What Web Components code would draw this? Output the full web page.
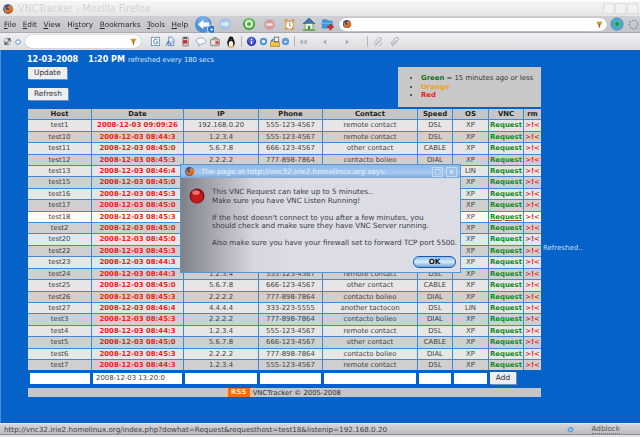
<!DOCTYPE html>
<html>
<head>
<meta charset="utf-8">
<title>VNCTracker - Mozilla Firefox</title>
<style>
  html, body { margin: 0; height: 100%; overflow: hidden; background: #0562c9; }
  body { font: 8px "DejaVu Sans", sans-serif; }
</style>
</head>
<body>
<ff-window>
  <vnc-page></vnc-page>
</ff-window>

<script>
// small toolbar icons, all drawn in a 16x16 box
const ICONS = {
  firefox: '<circle cx="8" cy="8" r="6.5" fill="#2c4f9c"/><path d="M3 3c-1 5 0 11 6 11 4 0 6-3 6-6-1-3-3-6-6-6 1 2 0 3-2 3 0 2 2 2 3 3-1 2-5 2-5-1z" fill="#e8761c"/><path d="M6 13c3 1 7 0 8-5-1 2-4 4-8 5z" fill="#c9401a"/>',
  back: '<circle cx="7" cy="8" r="7" fill="#4c8fd8"/><circle cx="7" cy="6" r="5" fill="#8cbcec" opacity=".6"/><path d="M2.5 8 7 4v2.4h5v3.2H7V12z" fill="#fff"/><circle cx="14" cy="12" r="3.6" fill="#2f78c8" stroke="#fff" stroke-width=".6"/><path d="M12.5 11.5h3l-1.500 2z" fill="#fff"/>',
  fwd: '<circle cx="8" cy="8" r="7" fill="#a9c4e2"/><path d="M13 8 8.500 4v2.400H3.500v3.200h5V12z" fill="#dfe9f4"/>',
  reload: '<circle cx="8" cy="8" r="7" fill="#46a83c"/><circle cx="8" cy="6" r="5" fill="#8ed67c" opacity=".6"/><circle cx="8" cy="8" r="3.600" fill="none" stroke="#fff" stroke-width="1.600"/><circle cx="8" cy="8" r="1.200" fill="#46a83c"/>',
  stop: '<circle cx="8" cy="8" r="6.500" fill="#d89aa0"/><rect x="4" y="6.500" width="8" height="3" rx="1" fill="#f2e0e0"/>',
  clock: '<circle cx="8" cy="9" r="5" fill="#fff" stroke="#e0a050" stroke-width="1.600"/><path d="M8 6v3l2 1" stroke="#906020" fill="none"/><path d="M2 4 5 1.500M14 4l-3-2.500M3 14l2-2M13 14l-2-2" stroke="#d88a30" stroke-width="2"/>',
  home: '<path d="M1 8 8 1.500 15 8" fill="#3a78b8" stroke="#24578f"/><rect x="3.500" y="7.500" width="9" height="7" fill="#f2f2ea" stroke="#5f8a4a" stroke-width=".8"/><rect x="6.700" y="10" width="2.800" height="4.500" fill="#3f9b3c"/><path d="M1 15h14" stroke="#5aa845" stroke-width="1.500"/>',
  addfolder: '<path d="M2 5q0-2.500 2.500-2.500h3L9 4h3.500Q15 4 15 6.500V13H2z" fill="#3f93d6"/><path d="M2 7h13" stroke="#8cc4ee"/><path d="M12 8v7M8.500 11.500h7" stroke="#d8201c" stroke-width="2.400"/>',
  go: '<circle cx="8" cy="8" r="7" fill="#58a6e2"/><circle cx="8" cy="8" r="4.800" fill="#46b89a"/><circle cx="8" cy="8" r="2" fill="#1c8a55"/><circle cx="8" cy="8" r="7" fill="none" stroke="#2e78c2" stroke-width=".8"/>',
  throbber: '<circle cx="8" cy="8" r="5.200" fill="none" stroke="#8a8f96" stroke-width="1.800" stroke-dasharray="2 1.600"/>',
  star: '<path d="M2 3h12l-3 3 1 1-3 2 .5 4-2.500 1-1-5-2.500-2 1-1z" fill="#c89a30"/><path d="M7 7h2v6H7z" fill="#8a6a20"/>',
  gear: '<circle cx="8" cy="8" r="5.500" fill="#8c929c"/><circle cx="6" cy="6" r="2.300" fill="#e6e8ec"/><circle cx="11" cy="10" r="2" fill="#dfe2e8"/><circle cx="5" cy="11.500" r="1.500" fill="#4c5158"/><circle cx="11" cy="4.500" r="1.500" fill="#4c5158"/>',
  dot: '<circle cx="8" cy="8" r="4.500" fill="#fff" stroke="#4f95d8" stroke-width="2"/>',
  g: '<rect x="2" y="2" width="12" height="12" fill="#fff" stroke="#5a8fc8" stroke-width="1.200"/><path d="M11 5.500q-1-1-2.700-1-3 0-3 3.500t3 3.500q2 0 2.700-1V8.300H8.500" fill="none" stroke="#3670b4" stroke-width="1.300"/>',
  doc: '<path d="M5 1.500h5l3 3V14H5z" fill="#dce8f6" stroke="#4d7eb8"/><path d="M2 14c1-3 2-6 3.500-6s2.500 4 3.500 6" fill="none" stroke="#3c70b4" stroke-width="1.500"/><path d="M10 8h2M10 10h2" stroke="#4d7eb8"/>',
  can: '<rect x="4" y="1.500" width="8" height="13" rx="1" fill="#d0d0cc" stroke="#4a4a4a" stroke-width=".8"/><rect x="4.500" y="6" width="6" height="5" fill="#c42a2a"/><rect x="5" y="2" width="5" height="2" fill="#333"/>',
  bubble: '<path d="M8 2.500c4 0 6.500 1.800 6.500 4s-2.500 4-6 4l-4 3 1-3.400C3 10 1.500 8.500 1.500 6.500s2.500-4 6.500-4z" fill="#f6f8fb" stroke="#7f98b6"/>',
  tool: '<rect x="2" y="4" width="12" height="9" rx="1.500" fill="#c8c2bc" stroke="#6e6a66" stroke-width=".8"/><path d="M5 4l1.500-2h3L11 4" fill="#a8a4a0" stroke="#6e6a66" stroke-width=".8"/><circle cx="11" cy="9" r="2.300" fill="#d84a5a"/><rect x="3.500" y="6" width="4" height="5" fill="#ecebe7"/>',
  tux: '<ellipse cx="8" cy="9" rx="5" ry="6" fill="#141414"/><circle cx="8" cy="4" r="3.200" fill="#141414"/><ellipse cx="8" cy="10.500" rx="3" ry="4" fill="#f4f4f0"/><path d="M6.800 4.500h2.400L8 6z" fill="#e8a818"/><path d="M3 15h4l-1-2H4zM13 15H9l1-2h2z" fill="#e8a818"/>',
  info: '<circle cx="8" cy="8" r="6.800" fill="#3640b8"/><circle cx="8" cy="6" r="4.800" fill="#6a74dc" opacity=".6"/><rect x="7" y="7" width="2" height="5" fill="#fff"/><circle cx="8" cy="4.800" r="1.200" fill="#fff"/>',
  up: '<circle cx="8" cy="8" r="6.500" fill="#4f94d6"/><circle cx="8" cy="8" r="3.200" fill="#e6f0fa"/>',
  open: '<path d="M2 7h5l1 1.500h6V14H2z" fill="#f0c040" stroke="#a87818" stroke-width=".8"/><rect x="7" y="1.500" width="6" height="6" fill="#f4f4f4" stroke="#556"/><path d="M3 7l3-3" stroke="#3c70b4" stroke-width="1.500"/>',
  down: '<circle cx="8" cy="8" r="6.500" fill="#5b9cd8"/><path d="M5 7l3 4 3-4z" fill="#e6f0fa"/>',
  rew: '<path d="M8 3 2 8l6 5zM14 3 8 8l6 5z" fill="#b4b8bc"/>',
  prev: '<path d="M10 3.500 5 8l5 4.500z" fill="#a8acb0"/>',
  next: '<path d="M6 3.500 11 8l-5 4.500z" fill="#a8acb0"/>',
  clip: '<path d="M4 14 12 5.500a2 2 0 0 0-3-3L3 9a1.500 1.500 0 0 0 2 2l5-5" fill="none" stroke="#b0b4b8" stroke-width="1.300"/><path d="M9 14l5-5" stroke="#c4c8cc" stroke-width="1.500"/>',
  clip2: '<path d="M4 14 12 5.500a2 2 0 0 0-3-3L3 9a1.500 1.500 0 0 0 2 2l5-5" fill="none" stroke="#b8bcc0" stroke-width="1.500"/>',
  globe: '<circle cx="8" cy="8" r="5" fill="#5a9ee0"/><path d="M5 5q3 1 2 4t4-1" fill="none" stroke="#dff" stroke-width="1.400"/>',
  alert: '<circle cx="8" cy="8" r="7.500" fill="#8c0a10"/><circle cx="8" cy="9" r="6" fill="#c41a1e"/><ellipse cx="7" cy="4.600" rx="3.800" ry="2.300" fill="#f08a8a" opacity=".8"/>'
};

class FfIcon extends HTMLElement {
  connectedCallback() {
    const s = this.getAttribute('size') || 14;
    this.attachShadow({ mode: 'open' }).innerHTML = `
      <style>:host { display: block; flex: none; width: ${s}px; height: ${s}px; } svg { display: block; }</style>
      <svg width="${s}" height="${s}" viewBox="0 0 16 16">${ICONS[this.getAttribute('name')] || ''}</svg>`;
  }
}
customElements.define('ff-icon', FfIcon);

class FfUrlbar extends HTMLElement {
  connectedCallback() {
    this.attachShadow({ mode: 'open' }).innerHTML = `
      <style>
        :host { display: flex; align-items: center; box-sizing: border-box; height: 13px; border-radius: 7px;
                background: #fff; box-shadow: 0 0 1px #8a8f96; padding: 0 3px; }
        .fill { flex: 1; }
      </style>
      <slot name="start"></slot><span class="fill"></span><slot name="end"></slot>`;
  }
}
customElements.define('ff-urlbar', FfUrlbar);

class FfWindow extends HTMLElement {
  constructor() {
    super();
    this.attachShadow({ mode: 'open' }).innerHTML = `
      <style>
        :host { display: flex; flex-direction: column; width: 640px; height: 437px; color: #333;
                font: 7.200px "DejaVu Sans", sans-serif; filter: blur(.3px); }
        .title { height: 16px; display: flex; align-items: center; padding-left: 2px;
                 background: linear-gradient(#f6f6f6, #e6e6e8); border-top: 1px solid #fff; box-sizing: border-box;
                 color: #d2d3d8; font-size: 9.600px; }
        .title span { margin-left: 4px; flex: 1; }
        .wb { display: flex; gap: 1px; margin-right: 2px; }
        .wb i { display: block; width: 11px; height: 11px; border: 1px solid #dcdde0; background: #f2f2f4; box-sizing: border-box; }
        .menu { height: 17px; display: flex; align-items: center; padding-left: 4px; box-sizing: border-box;
                background: linear-gradient(#cfd0d4, #c4c5ca); border-bottom: 1px solid #a8aab0; }
        .menu a { color: #2a2a30; margin-right: 6.500px; font-size: 7.300px; }
        .menu u { text-decoration: underline; }
        .bk { height: 17px; display: flex; align-items: center; padding-left: 2px; box-sizing: border-box;
              background: linear-gradient(#f0f0f2, #dcdde0); }
        .sep { width: 1px; height: 11px; background: #b4b6ba; flex: none; }
        .main { flex: 1; min-height: 0; background: #0562c9; border-left: 1px solid #4a8ed8; }
        .status { height: 11px; flex: none; display: flex; align-items: center; padding: 0 20px 0 4px; color: #3c4048;
                  background: linear-gradient(#d6d6d8, #bcbdc0); font-size: 7.200px; border-top: 1px solid #e4e4e6; box-sizing: border-box; }
        .status span { flex: 1; white-space: nowrap; }
        .status b { font-weight: normal; margin-left: 17px; border-bottom: 1px dotted #777; color: #555; }
        .foot { height: 3px; flex: none; background: #e2e2e4; border-top: 1px solid #8f9094; box-sizing: border-box; }
      </style>
      <div class="title">
        <ff-icon name="firefox" size="12"></ff-icon><span>VNCTracker - Mozilla Firefox</span>
        <div class="wb"><i></i><i></i><i></i></div>
      </div>
      <div class="menu">
        <a><u>F</u>ile</a><a><u>E</u>dit</a><a><u>V</u>iew</a><a>Hi<u>s</u>tory</a><a><u>B</u>ookmarks</a><a><u>T</u>ools</a><a><u>H</u>elp</a>
        <ff-icon name="back" size="19"></ff-icon>
        <ff-icon name="fwd" size="14" style="margin-left:4px"></ff-icon>
        <ff-icon name="reload" size="14" style="margin-left:10px"></ff-icon>
        <ff-icon name="stop" size="13" style="margin-left:7px"></ff-icon>
        <ff-icon name="clock" size="13" style="margin-left:7px"></ff-icon>
        <ff-icon name="home" size="14" style="margin-left:6px"></ff-icon>
        <ff-icon name="addfolder" size="14" style="margin-left:4px"></ff-icon>
        <ff-urlbar style="width:269px;margin-left:5px">
          <ff-icon slot="start" name="firefox" size="10"></ff-icon>
          <ff-icon slot="end" name="star" size="9"></ff-icon>
        </ff-urlbar>
        <ff-icon name="go" size="14" style="margin-left:3px"></ff-icon>
        <ff-icon name="throbber" size="13" style="margin-left:3px"></ff-icon>
      </div>
      <div class="bk">
        <ff-icon name="gear" size="11"></ff-icon>
        <ff-icon name="dot" size="8" style="margin-left:1px"></ff-icon>
        <ff-urlbar style="width:116px;margin-left:3px">
          <ff-icon slot="end" name="star" size="9"></ff-icon>
        </ff-urlbar>
        <ff-icon name="g" size="11" style="margin-left:9px"></ff-icon>
        <ff-icon name="doc" size="11" style="margin-left:4px"></ff-icon>
        <ff-icon name="can" size="11" style="margin-left:4px"></ff-icon>
        <ff-icon name="bubble" size="12" style="margin-left:4px"></ff-icon>
        <ff-icon name="tool" size="12" style="margin-left:2px"></ff-icon>
        <ff-icon name="tux" size="12" style="margin-left:4px"></ff-icon>
        <span class="sep" style="margin-left:4px"></span>
        <ff-icon name="info" size="11" style="margin-left:4px"></ff-icon>
        <ff-icon name="up" size="9" style="margin-left:2px"></ff-icon>
        <ff-icon name="open" size="12" style="margin-left:1px"></ff-icon>
        <ff-icon name="down" size="9" style="margin-left:0"></ff-icon>
        <span class="sep" style="margin-left:4px"></span>
        <ff-icon name="rew" size="10" style="margin-left:3px"></ff-icon>
        <ff-icon name="prev" size="10" style="margin-left:12px"></ff-icon>
        <ff-icon name="next" size="10" style="margin-left:12px"></ff-icon>
        <span class="sep" style="margin-left:15px"></span>
        <ff-icon name="clip" size="12" style="margin-left:4px"></ff-icon>
        <ff-icon name="clip2" size="12" style="margin-left:5px"></ff-icon>
      </div>
      <div class="main"><slot></slot></div>
      <div class="status">
        <span>http://vnc32.irie2.homelinux.org/index.php?dowhat=Request&amp;requesthost=test18&amp;listenip=192.168.0.20</span>
        <ff-icon name="globe" size="9"></ff-icon>
        <b>Adblock</b>
      </div>
      <div class="foot"></div>`;
  }
}
customElements.define('ff-window', FfWindow);

const D = '2008-12-03 08:';
const HOSTS = [
  ['test1',  D.slice(0,11)+'09:09:26', '192.168.0.20', '555-123-4567', 'remote contact', 'DSL', 'XP'],
  ['test10', D+'44:3', '1.2.3.4', '555-123-4567', 'remote contact', 'DSL', 'XP'],
  ['test11', D+'45:0', '5.6.7.8', '666-123-4567', 'other contact', 'CABLE', 'XP'],
  ['test12', D+'45:3', '2.2.2.2', '777-898-7864', 'contacto bolieo', 'DIAL', 'XP'],
  ['test13', D+'46:4', '4.4.4.4', '333-223-5555', 'another tactocon', 'DSL', 'LIN'],
  ['test15', D+'45:0', '5.6.7.8', '666-123-4567', 'other contact', 'CABLE', 'XP'],
  ['test16', D+'45:3', '2.2.2.2', '777-898-7864', 'contacto bolieo', 'DIAL', 'XP'],
  ['test17', D+'45:0', '5.6.7.8', '666-123-4567', 'other contact', 'CABLE', 'XP'],
  ['test18', D+'45:3', '192.168.0.20', '555-123-4567', 'remote contact', 'DSL', 'XP'],
  ['test2',  D+'45:0', '5.6.7.8', '666-123-4567', 'other contact', 'CABLE', 'XP'],
  ['test20', D+'45:0', '5.6.7.8', '666-123-4567', 'other contact', 'CABLE', 'XP'],
  ['test22', D+'45:3', '2.2.2.2', '777-898-7864', 'contacto bolieo', 'DIAL', 'XP'],
  ['test23', D+'44:3', '1.2.3.4', '555-123-4567', 'remote contact', 'DSL', 'XP'],
  ['test24', D+'44:3', '1.2.3.4', '555-123-4567', 'remote contact', 'DSL', 'XP'],
  ['test25', D+'45:0', '5.6.7.8', '666-123-4567', 'other contact', 'CABLE', 'XP'],
  ['test26', D+'45:3', '2.2.2.2', '777-898-7864', 'contacto bolieo', 'DIAL', 'XP'],
  ['test27', D+'46:4', '4.4.4.4', '333-223-5555', 'another tactocon', 'DSL', 'LIN'],
  ['test3',  D+'45:3', '2.2.2.2', '777-898-7864', 'contacto bolieo', 'DIAL', 'XP'],
  ['test4',  D+'44:3', '1.2.3.4', '555-123-4567', 'remote contact', 'DSL', 'XP'],
  ['test5',  D+'45:0', '5.6.7.8', '666-123-4567', 'other contact', 'CABLE', 'XP'],
  ['test6',  D+'45:3', '2.2.2.2', '777-898-7864', 'contacto bolieo', 'DIAL', 'XP'],
  ['test7',  D+'44:3', '1.2.3.4', '555-123-4567', 'remote contact', 'DSL', 'XP']
];

class VncTable extends HTMLElement {
  connectedCallback() {
    const heads = ['Host', 'Date', 'IP', 'Phone', 'Contact', 'Speed', 'OS', 'VNC', 'rm'];
    const rows = HOSTS.map((r, i) => {
      const cls = r[0] === 'test18' ? 'hov' : (i % 2 ? 'dark' : 'light');
      return r.map((v, c) => `<div class="${cls}${c === 1 ? ' date' : ''}">${v}</div>`).join('') +
        `<div class="${cls} req">${r[0] === 'test18' ? '<u>Request</u>' : 'Request'}</div><div class="${cls} rm">&gt;!&lt;</div>`;
    }).join('');
    this.attachShadow({ mode: 'open' }).innerHTML = `
      <style>
        :host { display: block; width: 513px; font-size: 6.900px; }
        .grid { display: grid; grid-template-columns: 63px 91px 74px 63px 94px 34px 35px 34px 17px; gap: 1px;
                grid-auto-rows: 10.410px; background: #3f8ad8; }
        .grid div { text-align: center; line-height: 10.400px; white-space: nowrap; overflow: hidden; color: #444; }
        .head { background: #c6c6c6; font-weight: bold; color: #1c1c1c !important; }
        .light { background: #e6e6e6; }
        .dark { background: #cfcfcf; }
        .hov { background: #fff; }
        .grid .date { color: #ee1c1c; font-weight: bold; }
        .grid .req { color: #128a20; font-weight: bold; }
        .grid .req u { text-decoration-color: #c05020; }
        .grid .rm { color: #ee2030; font-weight: bold; }
        .form { display: grid; grid-template-columns: 63px 91px 74px 63px 94px 34px 35px 34px; column-gap: 1px; padding-top: 3px; }
        .form span { display: block; box-sizing: border-box; height: 11px; margin: 0 1px; background: #fff; padding-left: 3px;
                     line-height: 11px; color: #444; overflow: hidden; white-space: nowrap; }
        .form span:first-child { margin-left: 2px; }
        .form vnc-button { margin: -1px 0 0 1px; justify-self: start; min-width: 26px; padding: 0; }
        .foot { margin-top: 4px; height: 9px; background: #c6c6c6; display: flex; justify-content: center; align-items: center; color: #333; gap: 3px; }
        .rss { background: #f07010; color: #f4e4d0; font-weight: bold; padding: 0 3px; height: 9px; line-height: 9px; font-size: 6.800px; letter-spacing: .3px; }
      </style>
      <div class="grid">
        ${heads.map(h => `<div class="head">${h}</div>`).join('')}
        ${rows}
      </div>
      <div class="form">
        <span></span><span>2008-12-03 13:20:0</span><span></span><span></span><span></span><span></span><span></span>
        <vnc-button>Add</vnc-button>
      </div>
      <div class="foot"><span class="rss">RSS</span><span>VNCTracker © 2005-2008</span></div>`;
  }
}
customElements.define('vnc-table', VncTable);

class VncButton extends HTMLElement {
  connectedCallback() {
    this.attachShadow({ mode: 'open' }).innerHTML = `
      <style>
        :host { display: inline-block; box-sizing: border-box; height: 12px; line-height: 12px; padding: 0 6px; background: #eceef2;
                color: #333; font-size: 7.400px; box-shadow: 1px 1px 0 #6f8fb8; text-align: center; }
      </style><slot></slot>`;
  }
}
customElements.define('vnc-button', VncButton);

class VncDialog extends HTMLElement {
  connectedCallback() {
    this.attachShadow({ mode: 'open' }).innerHTML = `
      <style>
        :host { position: absolute; left: 180px; top: 164px; width: 281px; height: 109px; box-sizing: border-box; display: flex; flex-direction: column;
                border: 1px solid #5e93cd; background: #dcdce4; color: #3a3a44; font-size: 7.200px; }
        .bar { height: 13px; flex: none; display: flex; align-items: center; padding: 0 3px; color: #e4eef8; font-size: 7.300px;
               background: linear-gradient(#8db8e8, #a6c8ee 60%, #7ba8dc); }
        .bar span { flex: 1; margin-left: 6px; white-space: nowrap; }
        .btn { width: 11px; height: 10px; margin-left: 3px; box-sizing: border-box; border: 1px solid #c4daf2; background: #9cc0e8; color: #fff;
               font-size: 7px; line-height: 8px; text-align: center; }
        .body { flex: 1; position: relative; display: flex; gap: 7px; padding: 10px 5px 0 8px;
                background: linear-gradient(90deg, #7e8088 0, #a8a9b0 12%, #d6d6de 26%, #dcdce4 40%); }
        p { margin: 0 0 8.200px; line-height: 8.700px; white-space: nowrap; }
        .ok { position: absolute; right: 4px; bottom: 4px; width: 43px; height: 12px; box-sizing: border-box; border-radius: 6px;
              border: 1.500px solid #1c5aa8; background: linear-gradient(#8cc0ee, #dcecf8 50%, #6aa4e0); color: #111; font-weight: bold; text-align: center; line-height: 9px; font-size: 7.200px; }
      </style>
      <div class="bar"><ff-icon name="firefox" size="11"></ff-icon><span>The page at http://vnc32.irie2.homelinux.org says:</span><div class="btn">□</div><div class="btn">×</div></div>
      <div class="body">
        <ff-icon name="alert" size="16"></ff-icon>
        <div>
          <p>This VNC Request can take up to 5 minutes..<br>Make sure you have VNC Listen Running!</p>
          <p>If the host doesn't connect to you after a few minutes, you<br>should check and make sure they have VNC Server running.</p>
          <p>Also make sure you have your firewall set to forward TCP port 5500.</p>
        </div>
        <div class="ok">OK</div>
      </div>`;
  }
}
customElements.define('vnc-dialog', VncDialog);

class VncPage extends HTMLElement {
  connectedCallback() {
    this.attachShadow({ mode: 'open' }).innerHTML = `
      <style>
        :host { display: block; padding: 4px 0 0 27px; color: #fff; }
        .clock { line-height: 11px; color: #d8e8f8; white-space: nowrap; font-size: 6.800px; margin-left: -1px; }
        .clock b { color: #fff; margin-right: 8px; font-size: 8px; }
        .clock b + b { margin-right: 1px; }
        .top { display: flex; width: 513px; justify-content: space-between; align-items: flex-start; margin-top: 1px; }
        .btns { display: flex; flex-direction: column; align-items: flex-start; gap: 9px; }
        .legend { width: 143px; height: 40px; box-sizing: border-box; background: #c8c8c8; color: #333; margin: 0; padding: 7px 0 0 23px; list-style: disc; font-size: 6.900px; }
        .legend li { line-height: 8.600px; white-space: nowrap; }
        .g { color: #14701c; } .o { color: #f0a020; } .r { color: #ee1c1c; }
        .wrap { display: flex; align-items: center; gap: 2px; margin-top: 2px; }
        .msg { color: #c4dcf6; font-size: 7px; margin-bottom: 10px; }
      </style>
      <div class="clock"><b>12-03-2008</b> <b>1:20 PM</b> refreshed every 180 secs</div>
      <div class="top">
        <div class="btns"><vnc-button>Update</vnc-button><vnc-button>Refresh</vnc-button></div>
        <ul class="legend">
          <li><b class="g">Green</b> = 15 minutes ago or less</li>
          <li><b class="o">Orange</b></li>
          <li><b class="r">Red</b></li>
        </ul>
      </div>
      <div class="wrap"><vnc-table></vnc-table><span class="msg">Refreshed..</span></div>
      <vnc-dialog></vnc-dialog>`;
  }
}
customElements.define('vnc-page', VncPage);
</script>
</body>
</html>
